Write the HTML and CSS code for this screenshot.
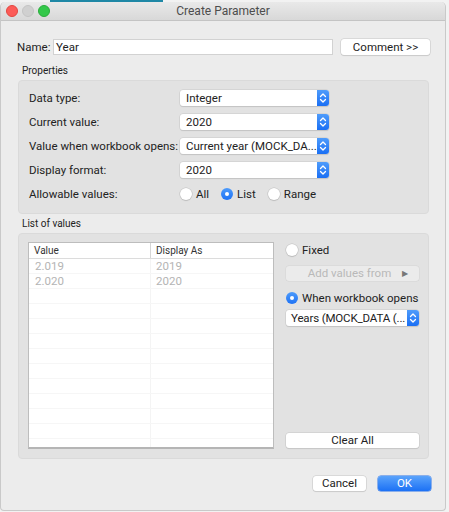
FILE: index.html
```html
<!DOCTYPE html>
<html lang="en">
<head>
    <meta charset="UTF-8">
    <meta name="viewport" content="width=device-width, initial-scale=1.0">
    <title>Create Parameter</title>
    <link rel="stylesheet" href="styles.css">
</head>
<body>
    <div class="back_tab"></div>
    <div class="window">
        <div class="titlebar">
            <div class="lights">
                <span class="light red"></span>
                <span class="light gray"></span>
                <span class="light green"></span>
            </div>
            <div class="title">Create Parameter</div>
        </div>

        <div class="name_row">
            <label class="name_label">Name:</label>
            <div class="text_input">Year</div>
            <div class="button comment_btn">Comment &gt;&gt;</div>
        </div>

        <div class="group_title">Properties</div>
        <div class="group props">
            <div class="prop_row">
                <div class="prop_label">Data type:</div>
                <div class="select"><span class="select_text">Integer</span><span class="stepper"></span></div>
            </div>
            <div class="prop_row">
                <div class="prop_label">Current value:</div>
                <div class="select"><span class="select_text">2020</span><span class="stepper"></span></div>
            </div>
            <div class="prop_row">
                <div class="prop_label">Value when workbook opens:</div>
                <div class="select"><span class="select_text">Current year (MOCK_DA...</span><span class="stepper"></span></div>
            </div>
            <div class="prop_row">
                <div class="prop_label">Display format:</div>
                <div class="select"><span class="select_text">2020</span><span class="stepper"></span></div>
            </div>
            <div class="prop_row">
                <div class="prop_label">Allowable values:</div>
                <div class="radios">
                    <div class="radio_item"><span class="radio"></span>All</div>
                    <div class="radio_item"><span class="radio checked"></span>List</div>
                    <div class="radio_item"><span class="radio"></span>Range</div>
                </div>
            </div>
        </div>

        <div class="group_title second">List of values</div>
        <div class="group values">
            <div class="table">
                <div class="table_head">
                    <div class="cell col1">Value</div>
                    <div class="cell col2">Display As</div>
                </div>
                <div class="table_body" id="rows"></div>
            </div>
            <div class="side">
                <div class="radio_item"><span class="radio"></span>Fixed</div>
                <div class="button disabled add_btn">Add values from <span class="arrow">&#9654;</span></div>
                <div class="radio_item when"><span class="radio checked"></span>When workbook opens</div>
                <div class="select side_select"><span class="select_text">Years (MOCK_DATA (...</span><span class="stepper"></span></div>
                <div class="button clear_btn">Clear All</div>
            </div>
        </div>

        <div class="footer">
            <div class="button footer_btn">Cancel</div>
            <div class="button footer_btn primary">OK</div>
        </div>
    </div>

    <script>
        const values = [['2.019', '2019'], ['2.020', '2020']];
        const rowCount = 13;
        let rowsHtml = '';
        for (let i = 0; i < rowCount; i++) {
            const v = values[i] || ['', ''];
            rowsHtml += `<div class="table_row"><div class="cell col1">${v[0]}</div><div class="cell col2">${v[1]}</div></div>`;
        }
        document.querySelector('#rows').innerHTML = rowsHtml;

        // chevrons for the blue steppers
        document.querySelectorAll('.stepper').forEach(el => {
            el.innerHTML = '<svg width="12" height="16" viewBox="0 0 12 16"><path d="M3.5 6.5 L6 4 L8.5 6.5 M3.5 9.5 L6 12 L8.5 9.5" fill="none" stroke="#fff" stroke-width="1.3" stroke-linecap="round" stroke-linejoin="round"/></svg>';
        });
    </script>
</body>
</html>
```

FILE: styles.css
```css
* {
    box-sizing: border-box;
}

body {
    margin: 0;
    background-color: #f2f2f2;
    font-family: Roboto, "Liberation Sans", Arial, sans-serif;
    font-size: 11.5px;
    color: #222;
    height: 512px;
    overflow: hidden;
}

.back_tab {
    width: 113px;
    height: 2px;
    margin-left: 50px;
    background-color: #1f88a6;
}

.window {
    width: 446px;
    height: 509px;
    background-color: #ececec;
    border: 1px solid #c9c9c9;
    border-top: none;
    border-radius: 5px 5px 4px 4px;
    overflow: hidden;
}

.titlebar {
    height: 19px;
    display: flex;
    align-items: center;
    background: linear-gradient(#e9e9e9, #d8d8d8);
    border-bottom: 1px solid #c4c4c4;
    border-radius: 5px 5px 0 0;
    position: relative;
}

.lights {
    display: flex;
    gap: 4px;
    padding-left: 5px;
}

.light {
    width: 12px;
    height: 12px;
    border-radius: 50%;
    display: block;
}
.light.red { background-color: #fc5b57; border: 0.5px solid #e2463f; }
.light.gray { background-color: #d0d0d0; border: 0.5px solid #c4c4c4; }
.light.green { background-color: #34c84a; border: 0.5px solid #2aac3c; }

.title {
    position: absolute;
    left: 0;
    right: 0;
    text-align: center;
    font-size: 12px;
    color: #4d4d4d;
    pointer-events: none;
}

.name_row {
    display: flex;
    align-items: center;
    margin-top: 18px;
    padding-left: 16px;
    height: 16px;
}

.name_label {
    width: 36px;
}

.text_input {
    width: 280px;
    height: 16px;
    background-color: #fff;
    border: 1px solid #d2d2d2;
    padding: 0 2px;
    line-height: 14px;
}

.button {
    background-color: #fff;
    border-radius: 3px;
    box-shadow: 0 0 0 0.5px #c5c5c5, 0 1px 1px rgba(0, 0, 0, 0.12);
    text-align: center;
    line-height: 15px;
    height: 15px;
    color: #222;
}

.comment_btn {
    width: 89px;
    margin-left: 8px;
    height: 16px;
    line-height: 16px;
}

.group_title {
    font-size: 10px;
    padding-left: 21px;
    margin-top: 9px;
    height: 14px;
    line-height: 14px;
}
.group_title.second {
    margin-top: 3px;
}

.group {
    margin: 0 0 0 17px;
    width: 411px;
    background-color: #e2e2e2;
    border: 1px solid #dadada;
    border-radius: 4px;
}

.props {
    margin-top: 2px;
    padding: 9px 0 11px 10px;
    display: flex;
    flex-direction: column;
    gap: 8px;
}

.prop_row {
    display: flex;
    align-items: center;
    height: 16px;
}

.prop_label {
    width: 151px;
    white-space: nowrap;
}

.select {
    display: flex;
    width: 149px;
    height: 16px;
    background-color: #fff;
    border-radius: 3px;
    box-shadow: 0 0 0 0.5px #c8c8c8, 0 1px 1px rgba(0, 0, 0, 0.15);
    overflow: hidden;
}

.select_text {
    flex: 1;
    padding-left: 6px;
    line-height: 16px;
    white-space: nowrap;
    overflow: hidden;
}

.stepper {
    width: 12px;
    height: 16px;
    background: linear-gradient(#4f9cfb, #1a6ff4);
    display: block;
}
.stepper svg {
    display: block;
}

.radios {
    display: flex;
    gap: 12px;
}

.radio_item {
    display: flex;
    align-items: center;
    gap: 4px;
    height: 16px;
    white-space: nowrap;
}

.radio {
    width: 12px;
    height: 12px;
    border-radius: 50%;
    background-color: #fff;
    box-shadow: 0 0 0 0.5px #bcbcbc, 0 1px 1px rgba(0, 0, 0, 0.15);
    display: block;
    position: relative;
}
.radio.checked {
    background: linear-gradient(#4d9bfb, #1e72f5);
    box-shadow: none;
}
.radio.checked::after {
    content: '';
    position: absolute;
    left: 4px;
    top: 4px;
    width: 4px;
    height: 4px;
    border-radius: 50%;
    background-color: #fff;
}

.values {
    margin-top: 2px;
    height: 226px;
    padding: 8px 0 0 9px;
    display: flex;
    gap: 12px;
}

.table {
    width: 246px;
    height: 207px;
    background-color: #fff;
    border: 1px solid #bdbdbd;
    border-bottom: 2px solid #b5b5b5;
    overflow: hidden;
}

.table_head {
    display: flex;
    height: 16px;
    border-bottom: 1px solid #dcdcdc;
    font-size: 10px;
}
.table_head .cell {
    line-height: 15px;
    color: #333;
}
.table_head .col1 {
    border-right: 1px solid #d6d6d6;
}

.table_row {
    display: flex;
    height: 15px;
    border-bottom: 1px solid #f6f6f6;
}

.cell {
    padding-left: 5px;
    color: #b4b4b4;
    line-height: 15px;
}
.col1 {
    width: 122px;
    border-right: 1px solid #f4f4f4;
}
.col2 {
    flex: 1;
}
.table_row .col1 {
    padding-left: 6px;
}

.side {
    width: 133px;
    display: flex;
    flex-direction: column;
}

.add_btn {
    margin-top: 8px;
    position: relative;
    height: 15px;
    color: #b9b9b9;
    background-color: #ebebeb;
    box-shadow: 0 0 0 0.5px #d3d3d3;
    padding-right: 6px;
}
.add_btn .arrow {
    font-size: 8px;
    color: #777;
    position: absolute;
    right: 11px;
    top: 0;
}

.when {
    margin-top: 9px;
}

.side_select {
    width: 133px;
    margin-top: 4px;
}
.side_select .select_text {
    padding-left: 5px;
    letter-spacing: -0.15px;
}

.clear_btn {
    margin-top: auto;
    margin-bottom: 10px;
    height: 15px;
}

.footer {
    display: flex;
    justify-content: flex-end;
    gap: 12px;
    padding-right: 14px;
    margin-top: 17px;
}

.footer_btn {
    width: 53px;
    height: 15px;
}

.footer_btn.primary {
    background: linear-gradient(#5aa3fb, #1c71f5);
    color: #fff;
    box-shadow: 0 0 0 0.5px #2a72e8;
}
```
